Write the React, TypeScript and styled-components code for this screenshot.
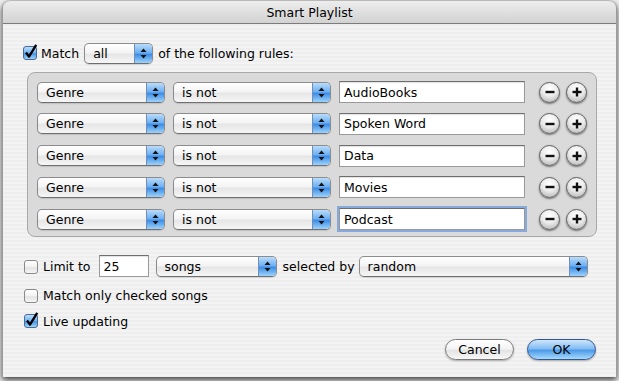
import styled, { createGlobalStyle } from "styled-components";

const GlobalStyle = createGlobalStyle`
    html, body {
        margin: 0;
        padding: 0;
    }
    body {
        width: 619px;
        height: 381px;
        overflow: hidden;
        background: #f2f2f2;
        font-family: "DejaVu Sans", "Liberation Sans", sans-serif;
        font-size: 12.5px;
        color: #000;
    }
`

const Window = styled.div`
    margin-left: 2px;
    width: 615px;
    height: 377px;
    box-sizing: border-box;
    border-left: 1px solid #9c9c9c;
    border-right: 1px solid #9c9c9c;
    border-radius: 8px 8px 0 0;
    background: repeating-linear-gradient(#eeeeee 0 2px, #f3f3f3 2px 4px);
    box-shadow: 0 3px 6px rgba(0, 0, 0, 0.75);
    display: flex;
    flex-direction: column;
    overflow: hidden;
`

const TitleBar = styled.div`
    height: 22px;
    flex-shrink: 0;
    display: flex;
    align-items: center;
    justify-content: center;
    background: linear-gradient(#ededed, #d2d2d2);
    border-bottom: 1px solid #7c7c7c;
    border-top: 1px solid #b8b8b8;
    border-radius: 8px 8px 0 0;
`

const Content = styled.div`
    padding: 19px 20px 0 17px;
    display: flex;
    flex-direction: column;
`

const Row = styled.div<{ $top?: number; $height?: number }>`
    display: flex;
    align-items: center;
    height: ${p => p.$height ?? 22}px;
    margin-top: ${p => p.$top ?? 0}px;
`

const Label = styled.span<{ $ml?: number }>`
    margin-left: ${p => p.$ml ?? 0}px;
    white-space: nowrap;
`

const Panel = styled.div`
    margin: 8px 0 0 7px;
    width: 570px;
    box-sizing: border-box;
    border: 1px solid #a9a9a9;
    border-radius: 8px;
    background: #dadada;
    padding: 8px 0 6px 9px;
    display: flex;
    flex-direction: column;
    gap: 9.75px;
`

const PopupBox = styled.div<{ $w: number; $ml?: number }>`
    width: ${p => p.$w}px;
    height: 21px;
    margin-left: ${p => p.$ml ?? 0}px;
    box-sizing: border-box;
    border: 1px solid #8c8c8c;
    border-bottom-color: #6f6f6f;
    border-radius: 5px;
    background: linear-gradient(#ffffff, #f4f4f4 45%, #e6e6e6 55%, #f6f6f6);
    display: flex;
    align-items: center;
    overflow: hidden;
    box-shadow: 0 1px 1px rgba(0, 0, 0, 0.12);
`

const PopupText = styled.span`
    flex: 1;
    padding-left: 8px;
    white-space: nowrap;
`

const PopupArrows = styled.div`
    width: 17px;
    height: 100%;
    border-left: 1px solid #6f8fb8;
    background: linear-gradient(#b9dcfb, #6fb0f2 45%, #3e8ee6 55%, #9ed3fb);
    display: flex;
    align-items: center;
    justify-content: center;
`

const Field = styled.div<{ $w: number; $ml?: number; $focused?: boolean }>`
    width: ${p => p.$w}px;
    height: 22px;
    margin-left: ${p => p.$ml ?? 0}px;
    box-sizing: border-box;
    background: #fff;
    border: 1px solid #9a9a9a;
    border-top-color: #6e6e6e;
    box-shadow: ${p => (p.$focused ? "0 0 0 2px #86a9de" : "inset 0 1px 1px rgba(0,0,0,0.12)")};
    padding-left: 4px;
    display: flex;
    align-items: center;
    white-space: nowrap;
`

const RoundButton = styled.div<{ $ml: number }>`
    width: 21px;
    height: 21px;
    margin-left: ${p => p.$ml}px;
    box-sizing: border-box;
    border-radius: 50%;
    border: 1px solid #5e5e5e;
    background: radial-gradient(circle at 50% 30%, #ffffff, #ececec 45%, #a9a9a9 100%);
    box-shadow: 0 1px 2px rgba(0, 0, 0, 0.5);
    display: flex;
    align-items: center;
    justify-content: center;
`

const ButtonRow = styled.div`
    display: flex;
    justify-content: flex-end;
    gap: 13px;
    margin-top: 10px;
`

const PushButton = styled.div<{ $primary?: boolean }>`
    width: 69px;
    height: 21px;
    box-sizing: border-box;
    border-radius: 11px;
    border: 1px solid ${p => (p.$primary ? "#34568f" : "#7a7a7a")};
    background: ${p =>
        p.$primary
            ? "linear-gradient(#cfe6fb, #83bdf3 45%, #4d9ae9 55%, #a7dafc)"
            : "linear-gradient(#ffffff, #f4f4f4 45%, #e4e4e4 55%, #f7f7f7)"};
    box-shadow: 0 1px 2px rgba(0, 0, 0, 0.3);
    display: flex;
    align-items: center;
    justify-content: center;
`

function Arrows() {
    return (
        <svg width="7" height="11" viewBox="0 0 7 11">
            <path d="M3.5 0.5 L6.5 4 L0.5 4 Z" fill="#111" />
            <path d="M0.5 7 L6.5 7 L3.5 10.5 Z" fill="#111" />
        </svg>
    )
}

function Popup({ value, width, ml }: { value: string; width: number; ml?: number }) {
    return (
        <PopupBox $w={width} $ml={ml}>
            <PopupText>{value}</PopupText>
            <PopupArrows><Arrows /></PopupArrows>
        </PopupBox>
    )
}

function CheckBox({ checked, ml }: { checked?: boolean; ml?: number }) {
    return (
        <svg width="15" height="16" viewBox="0 0 15 16" style={{ marginLeft: ml ?? 0, marginTop: checked ? -3 : 0 }}>
            <defs>
                <linearGradient id="cbBlue" x1="0" y1="0" x2="0" y2="1">
                    <stop offset="0" stopColor="#c2e0fb" />
                    <stop offset="0.5" stopColor="#6eb2f0" />
                    <stop offset="0.55" stopColor="#4593e4" />
                    <stop offset="1" stopColor="#a8dafd" />
                </linearGradient>
                <linearGradient id="cbWhite" x1="0" y1="0" x2="0" y2="1">
                    <stop offset="0" stopColor="#ffffff" />
                    <stop offset="0.5" stopColor="#f2f2f2" />
                    <stop offset="0.55" stopColor="#e3e3e3" />
                    <stop offset="1" stopColor="#f8f8f8" />
                </linearGradient>
            </defs>
            <rect x="0.5" y="2.5" width="13" height="13" rx="2.5"
                  fill={checked ? "url(#cbBlue)" : "url(#cbWhite)"}
                  stroke={checked ? "#4b6a93" : "#8a8a8a"} />
            {checked && (
                <path d="M3 8.5 L6 12.6 L13.2 0.8" fill="none" stroke="#000" strokeWidth="2.3" strokeLinejoin="round" />
            )}
        </svg>
    )
}

function Minus() {
    return (
        <svg width="10" height="10" viewBox="0 0 10 10">
            <rect x="0.5" y="3.8" width="9" height="2.4" fill="#111" />
        </svg>
    )
}

function Plus() {
    return (
        <svg width="10" height="10" viewBox="0 0 10 10">
            <rect x="0.5" y="3.8" width="9" height="2.4" fill="#111" />
            <rect x="3.8" y="0.5" width="2.4" height="9" fill="#111" />
        </svg>
    )
}

const rules = ["AudioBooks", "Spoken Word", "Data", "Movies", "Podcast"]

function App() {
    return (
        <>
            <GlobalStyle />
            <Window>
                <TitleBar>Smart Playlist</TitleBar>
                <Content>
                    <Row $height={21}>
                        <CheckBox checked ml={3} />
                        <Label $ml={3}>Match</Label>
                        <Popup value="all" width={69} ml={5} />
                        <Label $ml={5}>of the following rules:</Label>
                    </Row>
                    <Panel>
                        {rules.map((rule, i) => (
                            <Row key={rule}>
                                <Popup value="Genre" width={128} />
                                <Popup value="is not" width={158} ml={8} />
                                <Field $w={186} $ml={8} $focused={i === rules.length - 1}>{rule}</Field>
                                <RoundButton $ml={14}><Minus /></RoundButton>
                                <RoundButton $ml={6}><Plus /></RoundButton>
                            </Row>
                        ))}
                    </Panel>
                    <Row $top={18}>
                        <CheckBox ml={4} />
                        <Label $ml={4}>Limit to</Label>
                        <Field $w={50} $ml={8}>25</Field>
                        <Popup value="songs" width={121} ml={7} />
                        <Label $ml={6}>selected by</Label>
                        <Popup value="random" width={229} ml={4} />
                    </Row>
                    <Row $top={10} $height={16}>
                        <CheckBox ml={4} />
                        <Label $ml={4}>Match only checked songs</Label>
                    </Row>
                    <Row $top={10} $height={16}>
                        <CheckBox checked ml={4} />
                        <Label $ml={4}>Live updating</Label>
                    </Row>
                    <ButtonRow>
                        <PushButton>Cancel</PushButton>
                        <PushButton $primary>OK</PushButton>
                    </ButtonRow>
                </Content>
            </Window>
        </>
    )
}

export default App
